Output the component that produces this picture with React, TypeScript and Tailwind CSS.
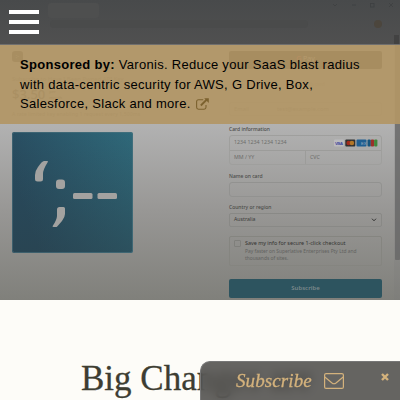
import type { ReactNode } from "react";

function Label({ children }: { children: ReactNode }) {
  return <div className="h-[9px] whitespace-nowrap text-[5px] leading-[9px] font-medium text-[#4c4c4a]">{children}</div>;
}

function Cards() {
  return (
    <svg width="44" height="8" viewBox="0 0 44 8">
      <rect x="0" y="0.5" width="10" height="7" rx="1" fill="#bbbbbd" />
      <text x="1" y="5.6" fontSize="4.2" fontWeight="bold" fontFamily="Liberation Sans, sans-serif" textLength="8" fill="#4045a0">VISA</text>
      <rect x="11.3" y="0.5" width="10" height="7" rx="1" fill="#303030" />
      <circle cx="14.7" cy="4" r="2.3" fill="#a12b1c" />
      <circle cx="17.9" cy="4" r="2.3" fill="#b37626" />
      <rect x="22.5" y="0.5" width="10" height="7" rx="1" fill="#215f91" />
      <text x="27" y="5.6" fontSize="4" fontFamily="Liberation Sans, sans-serif" fill="#a0b0c0">EX</text>
      <rect x="33.5" y="0.5" width="3.3" height="7" rx="1" fill="#18557d" />
      <rect x="36.8" y="0.5" width="3.3" height="7" rx="1" fill="#9b3029" />
      <rect x="40.1" y="0.5" width="3.3" height="7" rx="1" fill="#40863b" />
    </svg>
  );
}

function Checkout() {
  return (
    <div className="ml-[29px] w-[153px] pt-[51px] font-['Noto_Sans',sans-serif]">
      <div className="h-[18px] rounded-[2px] bg-[#252525] text-center text-[7px] leading-[16px] text-[#ccc]">
        <span className="text-red-500">G</span> Pay
      </div>
      <div className="mt-[11px] h-[9px] text-center text-[5px] leading-[9px] text-[#999]">Or pay with card</div>
      <div className="mt-[13px] flex h-[14px] items-center rounded-[2px] border border-[#a5a5a5] px-1 text-[5.8px] text-[#777]">
        <span className="w-[43px]">Email</span>test@example.com
      </div>
      <div className="mt-[9px]"><Label>Card information</Label></div>
      <div className="mt-px h-[30px] rounded-[3px] border border-[#9f9f9d] text-[5.3px] text-[#6c6c6a]">
        <div className="flex h-[14px] items-center justify-between pl-1 pr-[3px]">
          <span>1234 1234 1234 1234</span><Cards />
        </div>
        <div className="flex h-[14px] items-center border-t border-[#9c9c9a]">
          <span className="h-full w-[76px] border-r border-[#9c9c9a] pl-1 leading-[13px]">MM / YY</span>
          <span className="pl-1">CVC</span>
        </div>
      </div>
      <div className="mt-[7px]"><Label>Name on card</Label></div>
      <div className="mt-px h-[15px] rounded-[3px] border border-[#929290]" />
      <div className="mt-[6px]"><Label>Country or region</Label></div>
      <div className="mt-[1px] flex h-[14px] items-center justify-between rounded-[2px] border border-[#898986] px-1 text-[5.2px] text-[#3c3c3a]">
        Australia
        <svg width="6" height="4" viewBox="0 0 6 4"><path d="M1 .7 3 2.8 5 .7" fill="none" stroke="#343434" /></svg>
      </div>
      <div className="mt-[9px] flex h-[30px] rounded-[2px] border border-[#858580] pl-1 pt-[2px]">
        <div className="mt-px h-[7px] w-[7px] shrink-0 rounded-[1px] border border-[#7f7f7b]" />
        <div className="ml-[4px] whitespace-nowrap text-[4.9px] leading-[7px] text-[#62625f]">
          <div className="mb-px h-[8px] text-[5.4px] leading-[9px] text-[#333331]">Save my info for secure 1-click checkout</div>
          Pay faster on Superlative Enterprises Pty Ltd and<br />thousands of sites.
        </div>
      </div>
      <div className="mt-[13px] h-[19px] rounded-[2px] bg-[#2d545f] text-center text-[6px] leading-[19px] font-semibold text-[#7b888b]">Subscribe</div>
    </div>
  );
}

function Product() {
  return (
    <div className="w-[200px] pl-[12px] pt-[51px] font-['Noto_Sans',sans-serif] text-[#777]">
      <div className="h-[11px] w-[11px] rounded-[3px] bg-[#333] text-center text-[6px] leading-[10px] text-[#aaa]">;-</div>
      <div className="mt-[12px] h-[10px] whitespace-nowrap text-[5.9px] leading-[10px]">Subscribe to Have I Been Pwned API Key</div>
      <div className="flex h-[21px] items-center gap-1 text-[13px] font-medium text-[#444]">$3.50 <span className="text-[4px] leading-[6px]">per<br />month</span></div>
      <div className="mt-[5px] h-[9px] whitespace-nowrap text-[5.3px] leading-[9px]">A rate limited key enabling 1 request every 1,500ms</div>
      <svg className="mt-[13px]" width="121" height="121" viewBox="0 0 121 121">
        <defs>
          <linearGradient id="tile" x1="0" y1="0.35" x2="1" y2="0">
            <stop stopColor="#284b5f" /><stop offset="1" stopColor="#2f697a" />
          </linearGradient>
          <linearGradient id="shade" x1="0" y1="0" x2="0" y2="1">
            <stop stopColor="#2a3c42" stopOpacity="0" /><stop offset="1" stopColor="#2a3c42" stopOpacity="0.42" />
          </linearGradient>
        </defs>
        <rect width="121" height="121" rx="2" fill="url(#tile)" />
        <rect x=".5" y=".5" width="120" height="120" rx="2" fill="url(#shade)" stroke="#527680" strokeOpacity=".5" />
        <g fill="#a3a2a0">
          <path d="M32 29h3.3q1 0 .5 1-5 8-4.8 12v5q0 2.5-2.5 2.5H25.5q-2.5 0-2.5-2.5v-4q0-4 3-8 4-6 6-6Z" />
          <rect x="44" y="47.5" width="9" height="9.5" rx="3" />
          <path d="M47.5 75h4q1.5 0 1.5 1.5V82q0 3-3 7l-4.8 5.5q-.5.5-1.5.5h-2.2q-1.5 0-.7-1.2 4-5.8 4.2-9.8v-6.5q0-2.5 2.5-2.5Z" />
          <rect x="61" y="61" width="19.5" height="6" rx="1.5" />
          <rect x="85.5" y="61" width="19.5" height="6" rx="1.5" />
        </g>
      </svg>
    </div>
  );
}

export default function App() {
  return (
    <main className="relative h-[400px] w-[400px] overflow-hidden bg-[#fdfcf8]">
      <section className="relative flex h-[300px] overflow-hidden bg-linear-to-b from-[#b2b2b2] from-[41%] via-[#989795] via-[70%] to-[#80807b]">
        <Product />
        <Checkout />
        <div className="ml-auto h-full w-[6px] bg-[#777]/20 pt-[35px]">
          <div className="ml-px h-[225px] w-[5px] rounded-b-[1px] bg-[#666]/80" />
        </div>
      </section>
      <header className="absolute inset-x-0 top-0 flex h-[45px] justify-between border-b border-[#706f6e] bg-linear-to-b from-[#484a4b] to-[#505050] pl-[9px] pt-[10px]">
        <div className="flex flex-col gap-[6px]">
          <i className="h-1 w-[30px] bg-white" />
          <i className="h-1 w-[30px] bg-white" />
          <i className="h-1 w-[30px] bg-white" />
        </div>
        <svg className="-mt-[10px]" width="352" height="44" viewBox="48 0 352 44" fill="none">
          <rect x="48" y="3" width="51" height="15" rx="3" fill="#4e4f4f" />
          <rect x="50" y="20" width="258" height="8" rx="4" fill="#4a4b4b" />
          <g stroke="#3e4041" strokeWidth=".8">
            <path d="m333 4 2 2 2-2M352 5h4M389 3l4 4m0-4-4 4" />
            <rect x="370.5" y="3.5" width="3.5" height="3.5" />
          </g>
          <circle cx="378" cy="24" r="4" fill="#4c463d" />
          <rect x="394" y="35" width="5" height="9" fill="#424242" />
        </svg>
      </header>
      <aside className="absolute inset-x-0 top-[45px] h-[79px] bg-[#b19665]/93 pl-[20px] pt-[10px] font-['Liberation_Sans',sans-serif] text-[13px] leading-[19.5px] tracking-[0.3px] whitespace-nowrap text-black">
        <b>Sponsored by:</b> Varonis. Reduce your SaaS blast radius<br />
        with data-centric security for AWS, G Drive, Box,<br />
        Salesforce, Slack and more.{" "}
        <svg className="ml-px inline -translate-y-px" width="13" height="12" viewBox="0 0 13 12" fill="none" stroke="#7c622f">
          <path d="M7.2 1.8H2.5Q.6 1.8.6 3.7v5.6q0 1.9 1.9 1.9h5.6q1.9 0 1.9-1.9V7" strokeWidth="1.1" />
          <path d="m4.8 7.5 6-6" strokeWidth="1.8" />
          <path d="M8.2.3h4.6v4.6Z" fill="#7c622f" stroke="none" />
        </svg>
      </aside>
      <h1 className="pl-[81px] pt-[56px] font-['Liberation_Serif',serif] text-[35px] leading-[46px] whitespace-nowrap text-[#3d3d32] [-webkit-text-stroke:0.3px_#3d3d32]">Big Changes are</h1>
      <footer className="absolute bottom-0 right-0 flex h-[39px] w-[200px] items-center rounded-tl-[10px] border-t border-l border-[#777] bg-[#4a4947]/85 pl-[35px] text-[#d4b27c] backdrop-blur-[5px]">
        <span className="w-[88px] font-['Liberation_Serif',serif] text-[19px] italic tracking-[0.1px] [-webkit-text-stroke:0.3px_#d4b27c]">Subscribe</span>
        <svg width="20" height="16" viewBox="0 0 20 16" fill="none" stroke="currentColor" strokeWidth="1.2"><rect x=".6" y=".6" width="18.8" height="14.8" rx="1.5" /><path d="M.8 4 8 10q2 1.5 4 0l7.2-6" /></svg>
        <svg className="mb-[8px] ml-[37px]" width="8" height="8" viewBox="0 0 8 8"><path d="m1 1 6 6M7 1 1 7" stroke="currentColor" strokeWidth="2.4" /></svg>
      </footer>
    </main>
  );
}
